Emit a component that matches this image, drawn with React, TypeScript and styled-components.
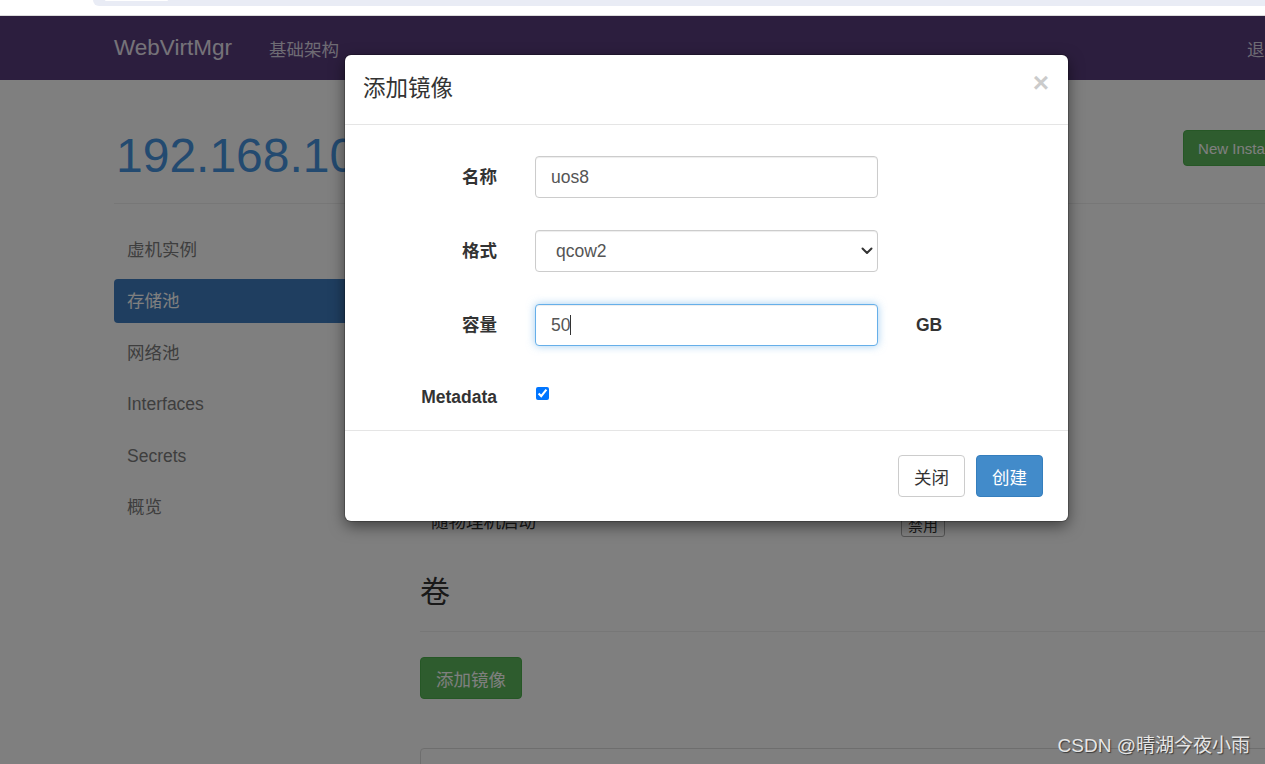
import { createGlobalStyle } from 'styled-components';
import styled from 'styled-components';

const GlobalStyle = createGlobalStyle`
  html, body {
    margin: 0;
    padding: 0;
    background: #fff;
    overflow: hidden;
  }
  body {
    font-family: "Liberation Sans", "Noto Sans CJK SC", sans-serif;
    font-size: 17.5px;
    color: #333;
  }
  * { box-sizing: border-box; }
`;

const SIDE_ITEMS = ['虚机实例', '存储池', '网络池', 'Interfaces', 'Secrets', '概览'];

const POOL_ROWS: [string, string][] = [
  ['名称', 'default'],
  ['路径', '/var/lib/libvirt/images'],
  ['类型', 'dir'],
  ['大小', '49.1 GB'],
  ['已用', '12.3 GB'],
  ['状态', '活动'],
  ['随物理机启动', ''],
];

export default function App() {
  return (
    <>
      <GlobalStyle />
      <BrowserStrip>
        <AddressBar>
          <AddressTab />
        </AddressBar>
      </BrowserStrip>

      <Viewport>
        <Page>
          <Navbar>
            <NavInner>
              <Brand>WebVirtMgr</Brand>
              <NavLink>基础架构</NavLink>
              <NavRight>退出</NavRight>
            </NavInner>
          </Navbar>

          <Container>
            <HeaderRow>
              <HostTitle>192.168.100.101</HostTitle>
              <GreenButton $size="sm">New Instance</GreenButton>
            </HeaderRow>
            <Rule />

            <BodyRow>
              <SideNav>
                {SIDE_ITEMS.map((s, i) => (
                  <SideItem key={s} $active={i === 1}>{s}</SideItem>
                ))}
              </SideNav>

              <Content>
                <InfoTable>
                  <tbody>
                    {POOL_ROWS.map(([k, v]) => (
                      <tr key={k}>
                        <KeyCell>{k}</KeyCell>
                        <ValueCell>{v || <SmallButton>禁用</SmallButton>}</ValueCell>
                      </tr>
                    ))}
                  </tbody>
                </InfoTable>

                <SectionTitle>卷</SectionTitle>
                <SectionRule />
                <GreenButton $size="md">添加镜像</GreenButton>
                <Panel />
              </Content>
            </BodyRow>
          </Container>
        </Page>

        <Backdrop>
          <Modal>
            <ModalHeader>
              <ModalTitle>添加镜像</ModalTitle>
              <CloseX aria-label="close">×</CloseX>
            </ModalHeader>

            <ModalBody>
              <FormGrid>
                <FieldLabel>名称</FieldLabel>
                <TextInput defaultValue="uos8" />
                <span />

                <FieldLabel>格式</FieldLabel>
                <SelectWrap>
                  <Select defaultValue="qcow2">
                    <option value="qcow2">qcow2</option>
                    <option value="raw">raw</option>
                  </Select>
                  <Chevron width="12" height="8" viewBox="0 0 12 8">
                    <path d="M1.5 1.5 L6 6 L10.5 1.5" fill="none" stroke="#333" strokeWidth="2" strokeLinecap="round" strokeLinejoin="round" />
                  </Chevron>
                </SelectWrap>
                <span />

                <FieldLabel>容量</FieldLabel>
                <CapacityField>
                  <TextInput defaultValue="50" $focused autoFocus />
                  <Caret />
                </CapacityField>
                <Unit>GB</Unit>

                <FieldLabel $top>Metadata</FieldLabel>
                <CheckCell>
                  <Check type="checkbox" defaultChecked />
                </CheckCell>
                <span />
              </FormGrid>
            </ModalBody>

            <ModalFooter>
              <FooterButton>关闭</FooterButton>
              <FooterButton $primary>创建</FooterButton>
            </ModalFooter>
          </Modal>
        </Backdrop>

        <Watermark>CSDN @晴湖今夜小雨</Watermark>
      </Viewport>
    </>
  );
}

// ── Browser strip ───────────────────────────────────────────────────────────

const BrowserStrip = styled.div`
  height: 16px;
  background: #fff;
  border-bottom: 1px solid #dcdcdc;
  display: flex;
  padding-left: 93px;
`;

const AddressBar = styled.div`
  flex: 1;
  height: 6px;
  background: #e9ecf5;
  border-bottom-left-radius: 8px;
  display: flex;
  padding-left: 12px;
`;

const AddressTab = styled.div`
  width: 63px;
  height: 1px;
  background: #fff;
  border-radius: 0 0 4px 4px;
`;

// ── Page under the backdrop ──────────────────────────────────────────────────

const Viewport = styled.div`
  position: relative;
  width: 1265px;
  height: 748px;
  overflow: hidden;
`;

const Page = styled.div`
  width: 1265px;
  height: 100%;
  background: #fff;
`;

const Navbar = styled.div`
  height: 64px;
  background: #583c7c;
`;

const NavInner = styled.div`
  width: 1190px;
  margin-left: 114px;
  height: 100%;
  display: flex;
  align-items: center;
`;

const Brand = styled.div`
  font-size: 22.5px;
  color: #ece6f3;
  margin-right: 37px;
`;

const NavLink = styled.div`
  font-size: 17.5px;
  color: #ddd6e6;
`;

const NavRight = styled.div`
  margin-left: auto;
  margin-right: 22px;
  font-size: 17.5px;
  color: #ddd6e6;
`;

const Container = styled.div`
  width: 1190px;
  margin-left: 114px;
`;

const HeaderRow = styled.div`
  display: flex;
  justify-content: space-between;
  align-items: flex-start;
  margin-top: 49px;
  height: 53px;
`;

const HostTitle = styled.h1`
  margin: 0 0 0 2px;
  font-size: 48px;
  line-height: 53px;
  font-weight: 400;
  color: #4795e0;
  white-space: nowrap;
`;

const GreenButton = styled.button<{ $size: 'sm' | 'md' }>`
  flex-shrink: 0;
  align-self: flex-start;
  height: ${p => (p.$size === 'sm' ? '36px' : '42px')};
  margin-top: ${p => (p.$size === 'sm' ? '1px' : '0')};
  padding: 0 ${p => (p.$size === 'sm' ? '14px' : '15px')};
  border: 1px solid #4cae4c;
  border-radius: 4px;
  background: #5cb85c;
  color: #fff;
  font-family: inherit;
  font-size: ${p => (p.$size === 'sm' ? '15px' : '17.5px')};
  white-space: nowrap;
`;

const Rule = styled.div`
  height: 1px;
  background: #eee;
  margin-top: 21px;
  margin-right: -40px;
`;

const BodyRow = styled.div`
  display: flex;
  gap: 44px;
  margin-top: 24px;
`;

const SideNav = styled.div`
  width: 262px;
  flex-shrink: 0;
  display: flex;
  flex-direction: column;
  gap: 7.4px;
`;

const SideItem = styled.div<{ $active?: boolean }>`
  height: 44px;
  line-height: 44px;
  padding-left: 13px;
  border-radius: 4px;
  font-size: 17.5px;
  background: ${p => (p.$active ? '#3f7cc0' : 'transparent')};
  color: ${p => (p.$active ? '#fff' : '#7c7c7c')};
`;

const Content = styled.div`
  flex: 1;
  min-width: 0;
  display: flex;
  flex-direction: column;
  align-items: flex-start;
`;

const InfoTable = styled.table`
  width: 660px;
  margin-top: 6px;
  border-collapse: collapse;
  table-layout: fixed;
`;

const KeyCell = styled.td`
  height: 44px;
  padding: 0 11px;
  width: 481px;
  font-size: 17.5px;
  color: #333;
`;

const ValueCell = styled.td`
  height: 44px;
  padding: 0 11px 0 0;
  font-size: 17.5px;
  color: #333;
`;

const SmallButton = styled.span`
  display: inline-flex;
  align-items: center;
  height: 26px;
  padding: 0 6px;
  border: 1px solid #aaa;
  border-radius: 3px;
  font-size: 15px;
  color: #333;
  background: #fff;
  transform: translateY(4px);
`;

const SectionTitle = styled.h3`
  margin: 33px 0 0;
  font-size: 30px;
  line-height: 33px;
  font-weight: 400;
  color: #333;
`;

const SectionRule = styled.div`
  align-self: stretch;
  height: 1px;
  background: #eee;
  margin: 23px -40px 25px 0;
`;

const Panel = styled.div`
  align-self: stretch;
  height: 120px;
  margin-top: 49px;
  margin-right: -40px;
  border: 1px solid #ddd;
  border-radius: 4px;
  background: #fff;
`;

// ── Modal ────────────────────────────────────────────────────────────────────

const Backdrop = styled.div`
  position: absolute;
  inset: 0;
  background: rgba(0, 0, 0, 0.5);
  padding: 39px 0 0 345px;
`;

const Modal = styled.div`
  width: 723px;
  background: #fff;
  border-radius: 6px;
  box-shadow: 0 0 0 1px rgba(0, 0, 0, 0.2), 0 5px 15px rgba(0, 0, 0, 0.5);
  display: flex;
  flex-direction: column;
`;

const ModalHeader = styled.div`
  height: 70px;
  border-bottom: 1px solid #e5e5e5;
  display: flex;
  align-items: center;
  justify-content: space-between;
  padding: 0 19px 2px 18px;
`;

const ModalTitle = styled.h4`
  margin: 0;
  font-size: 22.5px;
  line-height: 32px;
  font-weight: 400;
  color: #333;
`;

const CloseX = styled.span`
  font-size: 28px;
  font-weight: 700;
  line-height: 1;
  color: #000;
  opacity: 0.2;
  margin-top: -12px;
`;

const ModalBody = styled.div`
  padding: 31px 0 21px;
`;

const FormGrid = styled.div`
  display: grid;
  grid-template-columns: 152px 343px auto;
  column-gap: 38px;
  row-gap: 32px;
  align-items: center;
`;

const FieldLabel = styled.label<{ $top?: boolean }>`
  text-align: right;
  font-weight: 700;
  font-size: 17.5px;
  line-height: 24px;
  color: #333;
  align-self: ${p => (p.$top ? 'start' : 'center')};
  padding-top: ${p => (p.$top ? '7px' : '0')};
`;

const TextInput = styled.input<{ $focused?: boolean }>`
  height: 42px;
  width: 100%;
  padding: 0 15px;
  font-family: inherit;
  font-size: 17.5px;
  color: #555;
  background: #fff;
  border: 1px solid ${p => (p.$focused ? '#66afe9' : '#ccc')};
  border-radius: 4px;
  box-shadow: ${p =>
    p.$focused
      ? 'inset 0 1px 1px rgba(0,0,0,.075), 0 0 8px rgba(102,175,233,.6)'
      : 'inset 0 1px 1px rgba(0,0,0,.075)'};
  outline: none;
  caret-color: transparent;
`;

const CapacityField = styled.div`
  position: relative;
  height: 42px;
`;

/* the text caret sitting after "50", drawn so it shows in a still picture */
const Caret = styled.span`
  position: absolute;
  left: 35px;
  top: 11px;
  width: 1px;
  height: 20px;
  background: #333;
  pointer-events: none;
`;

const SelectWrap = styled.div`
  position: relative;
  height: 42px;
`;

const Select = styled.select`
  appearance: none;
  width: 100%;
  height: 42px;
  padding: 0 30px 0 20px;
  font-family: inherit;
  font-size: 17.5px;
  color: #555;
  background: #fff;
  border: 1px solid #ccc;
  border-radius: 4px;
  box-shadow: inset 0 1px 1px rgba(0, 0, 0, 0.075);
  outline: none;
`;

const Chevron = styled.svg`
  position: absolute;
  right: 5px;
  top: 17px;
  pointer-events: none;
`;

const Unit = styled.span`
  font-weight: 700;
  font-size: 17.5px;
  color: #333;
`;

const CheckCell = styled.div`
  align-self: start;
  height: 31px;
`;

const Check = styled.input`
  width: 13px;
  height: 13px;
  margin: 9px 0 0 1px;
`;

const ModalFooter = styled.div`
  border-top: 1px solid #e5e5e5;
  padding: 24px 25px 24px;
  display: flex;
  justify-content: flex-end;
  gap: 11px;
`;

const FooterButton = styled.button<{ $primary?: boolean }>`
  height: 42px;
  padding: 0 15px;
  border-radius: 4px;
  font-family: inherit;
  font-size: 17.5px;
  border: 1px solid ${p => (p.$primary ? '#357ebd' : '#ccc')};
  background: ${p => (p.$primary ? '#428bca' : '#fff')};
  color: ${p => (p.$primary ? '#fff' : '#333')};
`;

const Watermark = styled.div`
  position: absolute;
  right: 15px;
  bottom: 6px;
  font-size: 19px;
  line-height: 24px;
  color: #e6e6e6;
  text-shadow: 1px 1px 1px rgba(40, 40, 40, 0.8);
  pointer-events: none;
`;
